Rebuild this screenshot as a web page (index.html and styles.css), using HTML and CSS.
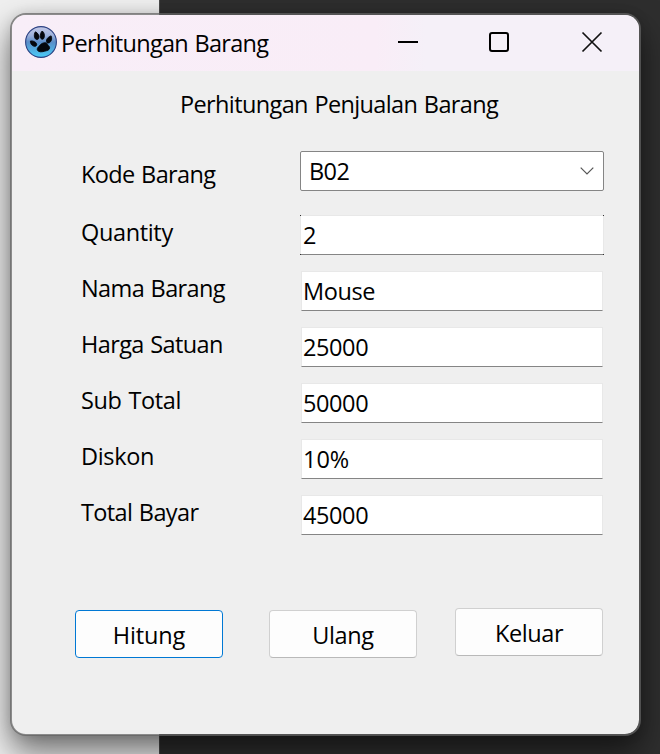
FILE: index.html
```html
<!DOCTYPE html>
<html lang="id">
<head>
<meta charset="utf-8">
<title>Perhitungan Barang</title>
<link rel="stylesheet" href="styles.css">
</head>
<body>
<main class="window">
  <header class="titlebar">
    <svg class="logo" width="32" height="32" viewBox="0 0 32 32">
      <defs><linearGradient id="orb" x1="0" y1="0" x2="0" y2="1"><stop offset="0" stop-color="#c3c9e6"/><stop offset=".28" stop-color="#9fb2dc"/><stop offset=".5" stop-color="#5b8dc8"/><stop offset="1" stop-color="#48cdf8"/></linearGradient></defs>
      <circle cx="16" cy="16" r="15.4" fill="url(#orb)" stroke="#2b4182" stroke-width="1.1"/>
      <g fill="#04070c" stroke="#04070c" stroke-width=".9" stroke-linejoin="round">
        <path d="M10.5 5.8C13 7 14.6 10 13.8 12.2C13 14.3 10.4 13.9 9.6 11.4C9 9.500 9.400 7 10.500 5.800Z"/>
        <path d="M17.200 5C19.200 6.300 19.900 9.400 19 11.900C18.200 14 15.700 13.500 15.300 11C15 8.800 15.800 6.300 17.200 5Z"/>
        <path d="M5.400 15C8 14.500 11.200 16 11.700 18.200C12 20.400 9.600 21 7.600 19.600C6 18.500 5.400 16.800 5.400 15Z"/>
        <path d="M26.100 9.900C27.300 12.300 26.500 15.500 24.400 16.700C22.300 17.700 20.900 16.200 21.600 13.900C22.300 11.900 24.100 10.400 26.100 9.900Z"/>
        <path d="M17.500 17.300C19.500 16.400 22 16.400 22.600 18.500C22.900 19.700 24.600 20 24.600 21.700C24.600 24.400 21.800 24.600 19.500 25.200C17 26 14 26.200 12.700 24.600C11.700 23.200 12.500 21.900 13.600 20.800C14.800 19.600 15.500 18.100 17.500 17.300Z"/>
      </g>
    </svg>
    <h1 class="caption">Perhitungan Barang</h1>
    <svg class="controls" width="206" height="24" viewBox="0 0 206 24">
      <path d="M0 12H20" stroke="#000" stroke-width="2"/>
      <rect x="92" y="3" width="18" height="18" rx="2" fill="none" stroke="#000" stroke-width="2"/>
      <path d="M184.500 2.500L203.500 21.500M203.500 2.500L184.500 21.500" stroke="#111" stroke-width="1.700"/>
    </svg>
  </header>
  <h2 class="heading">Perhitungan Penjualan Barang</h2>
  <form class="fields">
    <div class="row first"><span class="label">Kode Barang</span>
      <div class="combo"><span class="value">B02</span><svg width="14" height="8" viewBox="0 0 14 8"><path d="M.7.700L7 7L13.300.700" fill="none" stroke="#555" stroke-width="1.200"/></svg></div></div>
    <div class="row"><span class="label loose">Quantity</span><div class="box active">2</div></div>
    <div class="row"><span class="label">Nama Barang</span><div class="box">Mouse</div></div>
    <div class="row"><span class="label">Harga Satuan</span><div class="box">25000</div></div>
    <div class="row"><span class="label loose">Sub Total</span><div class="box">50000</div></div>
    <div class="row"><span class="label loose">Diskon</span><div class="box percent">10%</div></div>
    <div class="row"><span class="label">Total Bayar</span><div class="box">45000</div></div>
  </form>
  <div class="actions">
    <button class="btn default">Hitung</button>
    <button class="btn reset">Ulang</button>
    <button class="btn close">Keluar</button>
  </div>
</main>
</body>
</html>
```
FILE: styles.css
```css
* { box-sizing: border-box; }
body {
  margin: 0;
  width: 660px;
  height: 754px;
  overflow: hidden;
  padding: 13px 19px 18px 10px;
  background: linear-gradient(90deg, #efefef 0 159px, #4a4a4a 159px 160px, #2e2e2e 160px);
  font: 23.5px/32px "Open Sans", "Noto Sans", sans-serif;
  letter-spacing: -.62px;
  word-spacing: 1px;
  color: #000;
}
.window {
  width: 631px;
  height: 723px;
  border: 2px solid rgba(100, 100, 100, .72);
  border-radius: 16px;
  background: #efefef;
  background-clip: padding-box;
  box-shadow: 0 16px 32px rgba(0, 0, 0, .54), 0 0 12px rgba(0, 0, 0, .1);
}
.titlebar {
  height: 56px;
  display: flex;
  align-items: center;
  padding: 0 35px 2px 13px;
  border-radius: 14px 14px 0 0;
  background: linear-gradient(90deg, #f8eef8, #f9edf7 58%, #f5f0f8 66%, #f5f0f8);
}
.logo { display: block; }
.caption { margin: 2px 0 0 4px; font: inherit; letter-spacing: -.7px; }
.controls { margin-left: auto; }
.heading { margin: 17px 0 0 168px; font: inherit; white-space: nowrap; }
.fields { margin: 31px 0 0 69px; }
.row {
  display: grid;
  grid-template-columns: 219px 304px;
  height: 40px;
  margin-bottom: 16px;
}
.row:last-child { margin-bottom: 0; }
.row.first { margin-bottom: 24px; }
.label { margin-top: 1px; white-space: nowrap; }
.loose { letter-spacing: -.35px; }
.first .label { margin-top: 7px; }
.combo {
  display: flex;
  align-items: center;
  justify-content: space-between;
  height: 40px;
  padding: 0 9px 0 8px;
  border: 1px solid #858585;
  border-radius: 2px;
  background: #fff;
}
.box {
  height: 40px;
  margin: 0 1px;
  padding: 3px 0 0 1px;
  border: 1px solid #e8e8e8;
  border-bottom-color: #858585;
  background: #fff;
  letter-spacing: -.4px;
}
.percent { letter-spacing: 0; }
.box.active {
  margin: 0;
  padding: 4px 0 0 3px;
  border: 0;
  background:
    linear-gradient(#333, #333) 0 0 / 1px 1px no-repeat,
    linear-gradient(#333, #333) 100% 0 / 1px 1px no-repeat,
    linear-gradient(#333, #333) 0 100% / 1px 1px no-repeat,
    linear-gradient(#333, #333) 100% 100% / 1px 1px no-repeat,
    linear-gradient(#858585, #858585) 0 100% / 100% 1px no-repeat,
    linear-gradient(#e8e8e8, #e8e8e8) 0 0 / 100% 1px no-repeat,
    linear-gradient(#e8e8e8, #e8e8e8) 0 0 / 1px 100% no-repeat,
    linear-gradient(#e8e8e8, #e8e8e8) 100% 0 / 1px 100% no-repeat,
    #fff;
}
.actions {
  display: flex;
  margin: 73px 0 0 63px;
  align-items: flex-start;
}
.btn {
  width: 148px;
  height: 48px;
  margin: 2px 0 0;
  padding: 2px 0 0;
  border: 1px solid #d0d0d0;
  border-bottom-color: #b9b9b9;
  border-radius: 4px;
  background: #fdfdfd;
  font: inherit;
  letter-spacing: -.4px;
  color: inherit;
}
.default { border-color: #0078d4; letter-spacing: -.15px; }
.reset { margin-left: 46px; }
.close { margin: 0 0 0 38px; }
```
